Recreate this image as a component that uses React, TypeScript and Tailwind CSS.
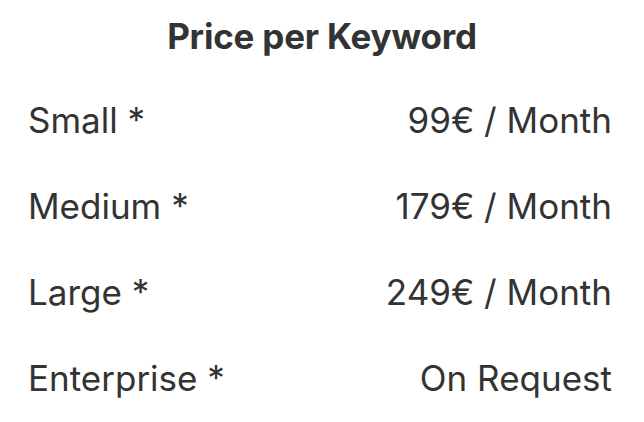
import React from 'react';

const prices = [
  { label: 'Small *', value: '99€ / Month' },
  { label: 'Medium *', value: '179€ / Month' },
  { label: 'Large *', value: '249€ / Month' },
  { label: 'Enterprise *', value: 'On Request' },
];

export default function App() {
  return (
    <div className="w-[644px] h-[422px] bg-white text-[#333333] font-['Inter',sans-serif] overflow-hidden">
      {/* Title */}
      <h2 className="pt-[14px] text-center text-[35px] leading-[44px] font-bold tracking-[-0.2px]">
        Price per Keyword
      </h2>

      {/* Price rows */}
      <div className="pl-[28px] pr-[32px] pt-[40px] flex flex-col gap-[42px]">
        {prices.map((p) => (
          <div key={p.label} className="flex items-center justify-between text-[35px] leading-[44px]">
            <span>{p.label}</span>
            <span>{p.value}</span>
          </div>
        ))}
      </div>
    </div>
  );
}
